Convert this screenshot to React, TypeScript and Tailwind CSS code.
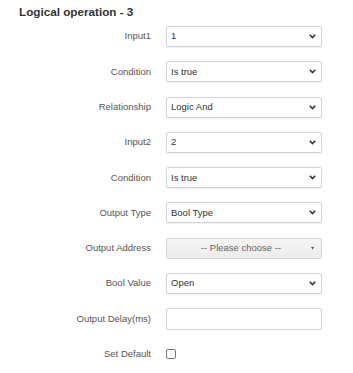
import { FC } from "react";

const Chevron: FC = () => (
  <svg width="7" height="5" viewBox="0 0 7 5" className="shrink-0">
    <path d="M0.8 0.8 L3.5 3.6 L6.2 0.8" fill="none" stroke="#333" strokeWidth="1.6" />
  </svg>
);

interface SelectProps {
  value: string;
}
const SelectBox: FC<SelectProps> = ({ value }) => (
  <div className="w-[156px] h-[21px] border border-[#d4d4d4] rounded-[2px] bg-white shadow-[0_1px_1px_rgba(0,0,0,0.06)] flex items-center justify-between pl-[4px] pr-[5px] text-[9.5px] text-[#333]">
    <span>{value}</span>
    <Chevron />
  </div>
);

const ChooseBox: FC = () => (
  <div className="w-[156px] h-[21px] border border-[#d4d4d4] rounded-[2px] bg-gradient-to-b from-[#f6f6f6] to-[#ececec] flex items-center pl-[4px] pr-[7px] text-[9.5px] text-[#666]">
    <span className="flex-1 text-center">-- Please choose --</span>
    <svg width="3" height="3" viewBox="0 0 3 3">
      <path d="M0 0 H3 L1.5 2.5 Z" fill="#444" />
    </svg>
  </div>
);

interface RowProps {
  label: string;
  children: React.ReactNode;
}
const Row: FC<RowProps> = ({ label, children }) => (
  <div className="flex items-center h-[21px]">
    <div className="w-[152px] text-right pr-[1px] text-[9.5px] text-[#555]">{label}</div>
    <div className="ml-[14px]">{children}</div>
  </div>
);

const App: FC = () => {
  return (
    <div
      className="w-[353px] h-[373px] bg-white overflow-hidden"
      style={{ fontFamily: '"Liberation Sans", Arial, sans-serif' }}
    >
      <div className="pl-[19px] pt-[5px] h-[26px] text-[11.7px] font-bold text-[#333] leading-[14px]">
        Logical operation - 3
      </div>
      <div className="flex flex-col gap-[14.3px]">
        <Row label="Input1">
          <SelectBox value="1" />
        </Row>
        <Row label="Condition">
          <SelectBox value="Is true" />
        </Row>
        <Row label="Relationship">
          <SelectBox value="Logic And" />
        </Row>
        <Row label="Input2">
          <SelectBox value="2" />
        </Row>
        <Row label="Condition">
          <SelectBox value="Is true" />
        </Row>
        <Row label="Output Type">
          <SelectBox value="Bool Type" />
        </Row>
        <Row label="Output Address">
          <ChooseBox />
        </Row>
        <Row label="Bool Value">
          <SelectBox value="Open" />
        </Row>
        <Row label="Output Delay(ms)">
          <div className="w-[156px] h-[22px] border border-[#d4d4d4] rounded-[2px] bg-white" />
        </Row>
        <Row label="Set Default">
          <div className="w-[10px] h-[10px] border border-[#777] rounded-[2px] bg-white" />
        </Row>
      </div>
    </div>
  );
};

export default App;
